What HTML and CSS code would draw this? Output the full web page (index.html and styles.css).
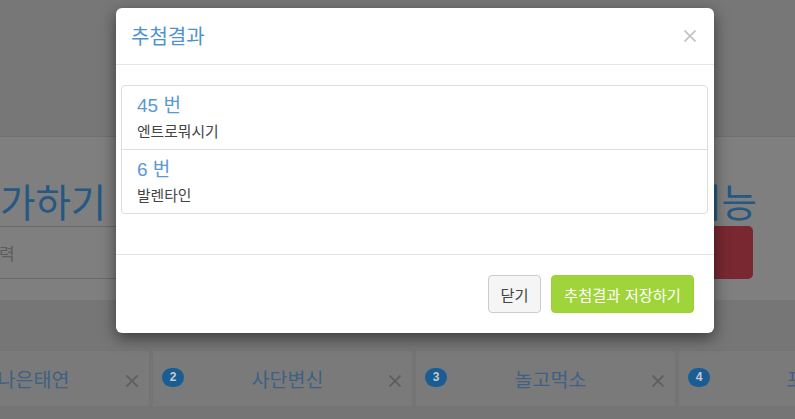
FILE: index.html
```html
<!DOCTYPE html>
<html lang="ko">
<head>
<meta charset="utf-8">
<title>추첨결과</title>
<link rel="stylesheet" href="styles.css">
</head>
<body>
<div class="page">
  <div class="top"></div>
  <div class="main">
    <div class="title-row">
      <span class="big-title left">가하기</span>
      <span class="big-title right">기능</span>
    </div>
    <div class="form-row">
      <div class="input"><span class="placeholder">력</span></div>
      <div class="red-btn"></div>
    </div>
  </div>
  <div class="band"></div>
  <div class="cards">
    <div class="card"><span class="badge">1</span><span class="card-name">하나은태연</span><span class="card-x"><svg width="12" height="12" viewBox="0 0 12 12"><path d="M0.5 0.5 L11.5 11.5 M11.5 0.5 L0.5 11.5" stroke="#5e5e5e" stroke-width="1.8" fill="none"/></svg></span></div>
    <div class="card"><span class="badge">2</span><span class="card-name">사단변신</span><span class="card-x"><svg width="12" height="12" viewBox="0 0 12 12"><path d="M0.5 0.5 L11.5 11.5 M11.5 0.5 L0.5 11.5" stroke="#5e5e5e" stroke-width="1.8" fill="none"/></svg></span></div>
    <div class="card"><span class="badge">3</span><span class="card-name">놀고먹소</span><span class="card-x"><svg width="12" height="12" viewBox="0 0 12 12"><path d="M0.5 0.5 L11.5 11.5 M11.5 0.5 L0.5 11.5" stroke="#5e5e5e" stroke-width="1.8" fill="none"/></svg></span></div>
    <div class="card"><span class="badge">4</span><span class="card-name">포도알</span><span class="card-x"><svg width="12" height="12" viewBox="0 0 12 12"><path d="M0.5 0.5 L11.5 11.5 M11.5 0.5 L0.5 11.5" stroke="#5e5e5e" stroke-width="1.8" fill="none"/></svg></span></div>
  </div>
</div>

<div class="modal">
  <div class="modal-header">
    <h4 class="modal-title">추첨결과</h4>
    <span class="close">
      <svg width="12" height="12" viewBox="0 0 12 12"><path d="M0.5 0.5 L11.5 11.5 M11.5 0.5 L0.5 11.5" stroke="#c2c2c2" stroke-width="1.6" fill="none"/></svg>
    </span>
  </div>
  <div class="modal-body">
    <div class="list-group">
      <div class="list-item">
        <h4 class="item-heading">45 번</h4>
        <p class="item-text">엔트로뭐시기</p>
      </div>
      <div class="list-item">
        <h4 class="item-heading">6 번</h4>
        <p class="item-text">발렌타인</p>
      </div>
    </div>
  </div>
  <div class="modal-footer">
    <span class="btn btn-default">닫기</span>
    <span class="btn btn-green">추첨결과 저장하기</span>
  </div>
</div>
</body>
</html>
```

FILE: styles.css
```css
* { box-sizing: border-box; }
html, body {
  margin: 0;
  padding: 0;
  width: 795px;
  height: 419px;
  overflow: hidden;
  background: #757575;
  font-family: "Liberation Sans", "Noto Sans CJK KR", sans-serif;
  font-size: 14px;
  color: #333;
}
.page {
  width: 795px;
  height: 419px;
  overflow: hidden;
}
.top {
  height: 137px;
  background: #777777;
  border-bottom: 1px solid #6f6f6f;
}
.main {
  height: 163px;
  background: #7f7f7f;
  padding-top: 38px;
}
.title-row {
  display: flex;
  justify-content: space-between;
  height: 50px;
  padding: 0 38px 0 0;
}
.big-title {
  font-family: "Noto Sans CJK KR", sans-serif;
  font-size: 38.5px;
  line-height: 50px;
  color: #255882;
}
.form-row {
  display: flex;
  justify-content: space-between;
  padding: 0 42px 0 0;
  margin-top: 1px;
}
.input {
  width: 420px;
  height: 53px;
  border-top: 1px solid #6a6a6a;
  border-bottom: 1px solid #6a6a6a;
  display: flex;
  align-items: center;
}
.placeholder {
  font-family: "Noto Sans CJK KR", sans-serif;
  font-size: 17px;
  color: #5c5c5c;
  margin-left: -1px;
}
.red-btn {
  width: 200px;
  height: 53px;
  background: #792831;
  border-radius: 5px;
}
.band {
  height: 50px;
  background: #767676;
}
.cards {
  display: flex;
  height: 57px;
  margin-left: -111px;
  gap: 2px;
}
.card {
  flex: 0 0 261px;
  height: 57px;
  background: #7a7a7a;
  border: 1px solid #747474;
  display: flex;
  align-items: center;
  padding: 0 11px 0 9px;
}
.badge {
  width: 22px;
  height: 19px;
  border-radius: 10px;
  background: #1a5d95;
  color: #c9c9c9;
  font-weight: bold;
  font-size: 12px;
  line-height: 19px;
  text-align: center;
  font-family: "Liberation Sans", sans-serif;
  margin-top: -2px;
}
.card-name {
  flex: 1;
  text-align: center;
  font-family: "Noto Sans CJK KR", sans-serif;
  font-size: 19.5px;
  color: #3e6184;
  padding-left: 2px;
}
.card-x {
  display: flex;
  width: 12px;
  height: 12px;
  margin-top: 4px;
}

/* modal */
.modal {
  position: absolute;
  left: 116px;
  top: 8px;
  width: 598px;
  background: #fff;
  border-radius: 6px;
  box-shadow: 0 5px 15px rgba(0, 0, 0, 0.5);
}
.modal-header {
  height: 57px;
  padding: 0 18px 0 15px;
  border-bottom: 1px solid #e5e5e5;
  display: flex;
  align-items: center;
  justify-content: space-between;
}
.modal-title {
  margin: 0;
  font-family: "Noto Sans CJK KR", sans-serif;
  font-weight: normal;
  font-size: 20px;
  color: #4f93cc;
  line-height: 24px;
}
.close {
  display: flex;
  width: 12px;
  height: 12px;
  margin-top: -1px;
}
.modal-body {
  padding: 20px 6px 40px 5px;
}
.list-group {
  border: 1px solid #dddddd;
  border-radius: 4px;
}
.list-item {
  height: 63px;
  padding: 9px 15px 0;
}
.list-item + .list-item {
  height: 64px;
  border-top: 1px solid #dddddd;
}
.item-heading {
  margin: 0 0 4px;
  font-weight: normal;
  font-size: 19px;
  line-height: 22px;
  color: #5a99d2;
  font-family: "Liberation Sans", "Noto Sans CJK KR", sans-serif;
}
.item-text {
  margin: 0;
  font-family: "Noto Sans CJK KR", sans-serif;
  font-size: 14.8px;
  line-height: 20px;
  color: #444;
}
.modal-footer {
  border-top: 1px solid #e5e5e5;
  padding: 20px 20px 20px;
  display: flex;
  justify-content: flex-end;
  gap: 10px;
}
.btn {
  display: inline-flex;
  align-items: center;
  justify-content: center;
  height: 38px;
  border-radius: 4px;
  font-family: "Noto Sans CJK KR", sans-serif;
  font-size: 15.3px;
}
.btn-default {
  width: 53px;
  background: #f5f5f5;
  border: 1px solid #cccccc;
  color: #444;
}
.btn-green {
  width: 143px;
  background: #9fd43a;
  color: #fff;
  border: 1px solid #9bd135;
}
```
